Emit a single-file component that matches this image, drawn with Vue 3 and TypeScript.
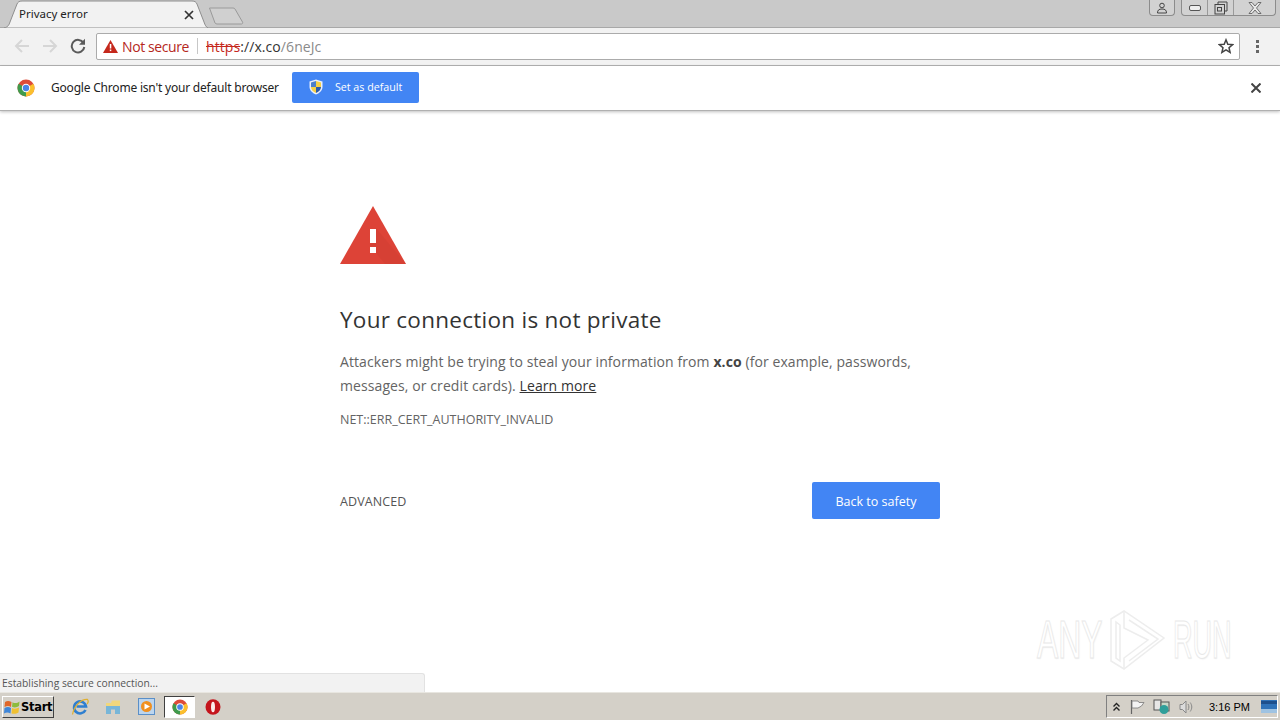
<script setup lang="ts">
const trayTime: string = '3:16 PM'
</script>

<template>
  <div class="screen">
    <header class="strip">
      <div class="tab">
        <svg class="tab-bg" width="204" height="28" viewBox="0 0 204 28">
          <path d="M0 28 C4 27 5 25 6 22 L13 4 C14 2 15 1 18 1 L188 1 C191 1 192 2 193 4 L200 22 C201 25 202 27 204 28 Z" fill="#f2f2f2" stroke="#8e8e8e" stroke-width="1"/>
        </svg>
        <span class="tab-title">Privacy error</span>
        <svg class="tab-close" width="10" height="10" viewBox="0 0 10 10"><path d="M1 1 L9 9 M9 1 L1 9" stroke="#333" stroke-width="1.7"/></svg>
      </div>
      <svg class="new-tab" width="36" height="18" viewBox="0 0 36 18"><path d="M1.5 1 L25 1 C26 1 26.5 1.3 27 2 L34.5 15 C35 16 34.5 17 33.500 17 L9 17 C8 17 7.500 16.500 7 16 Z" fill="#d0d0d0" stroke="#9a9a9a"/></svg>
      <div class="win-controls">
        <div class="win-group user">
          <svg width="12" height="12" viewBox="0 0 12 12"><circle cx="6" cy="3.500" r="2.300" fill="none" stroke="#444"/><path d="M1.500 11 C1.500 8 3 7 6 7 C9 7 10.500 8 10.500 11 Z" fill="none" stroke="#444"/></svg>
        </div>
        <div class="win-group">
          <div class="win-btn min"><span class="min-bar"></span></div>
          <div class="win-btn restore">
            <svg width="14" height="14" viewBox="0 0 14 14"><path d="M4 3.500 V1 H13 V10 H10.500" fill="none" stroke="#444"/><rect x="1" y="3.500" width="9.500" height="9.500" fill="none" stroke="#444"/><rect x="3.500" y="6.500" width="4" height="3.500" fill="none" stroke="#444"/></svg>
          </div>
          <div class="win-btn close">
            <svg width="14" height="12" viewBox="0 0 14 12"><path d="M1 0.500 L4 0.500 L7 4 L10 0.500 L13 0.500 L8.500 6 L13 11.500 L10 11.500 L7 8 L4 11.500 L1 11.500 L5.500 6 Z" fill="#e8e8e8" stroke="#555" stroke-width="0.800"/></svg>
          </div>
        </div>
      </div>
    </header>

    <nav class="toolbar">
      <svg class="nav-icon first" width="16" height="16" viewBox="0 0 16 16"><path d="M15 8 H2.500 M8 2 L2 8 L8 14" fill="none" stroke="#d6d6d6" stroke-width="2"/></svg>
      <svg class="nav-icon" width="16" height="16" viewBox="0 0 16 16"><path d="M1 8 H13.500 M8 2 L14 8 L8 14" fill="none" stroke="#d6d6d6" stroke-width="2"/></svg>
      <svg class="nav-icon" width="16" height="16" viewBox="0 0 16 16"><path d="M13.500 5 A6.300 6.300 0 1 0 14.300 9" fill="none" stroke="#5a5a5a" stroke-width="2"/><path d="M15 0.800 V6.800 H9 Z" fill="#5a5a5a"/></svg>
      <div class="omnibox">
        <svg class="warn" width="15" height="13" viewBox="0 0 15 13"><path d="M7.500 0 L15 13 H0 Z" fill="#c5281c"/><rect x="6.800" y="4" width="1.500" height="4.500" fill="#fff"/><rect x="6.800" y="9.500" width="1.500" height="1.600" fill="#fff"/></svg>
        <span class="not-secure">Not secure</span>
        <span class="sep"></span>
        <span class="url"><span class="scheme">https</span><span class="host">://x.co</span><span class="path">/6neJc</span></span>
        <svg class="star" width="16" height="16" viewBox="0 0 16 16"><path d="M8 1.800 L9.800 6.200 L14.600 6.600 L11 9.700 L12.100 14.400 L8 11.900 L3.900 14.400 L5 9.700 L1.400 6.600 L6.200 6.200 Z" fill="none" stroke="#444" stroke-width="1.500"/></svg>
      </div>
      <div class="menu-dots"><i></i><i></i><i></i></div>
    </nav>

    <section class="infobar">
      <svg class="chrome-icon" width="18" height="18" viewBox="0 0 18 18">
        <circle cx="9" cy="9" r="8.500" fill="#dd4b39"/>
        <path d="M9 9 L16.400 4.800 A8.500 8.500 0 0 1 9 17.500 Z" fill="#fbc02d"/>
        <path d="M9 9 L9 17.500 A8.500 8.500 0 0 1 1.600 4.800 Z" fill="#3f9b4c"/>
        <circle cx="9" cy="9" r="4.200" fill="#fff"/>
        <circle cx="9" cy="9" r="3.200" fill="#4a84e8"/>
      </svg>
      <span class="info-text">Google Chrome isn't your default browser</span>
      <div class="set-default">
        <svg width="14" height="16" viewBox="0 0 14 16">
          <path d="M7 0.500 L13.500 2.500 V8 C13.500 11.500 10 14.500 7 15.500 C4 14.500 0.500 11.500 0.500 8 V2.500 Z" fill="#e8eefc"/>
          <path d="M7 2 L12 3.500 V8 H7 Z" fill="#f5cf45"/>
          <path d="M7 2 L2 3.500 V8 H7 Z" fill="#4a7ecb"/>
          <path d="M2 8 H7 V14 C4.500 13 2 11 2 8 Z" fill="#f5cf45"/>
          <path d="M12 8 H7 V14 C9.500 13 12 11 12 8 Z" fill="#2d5aa8"/>
        </svg>
        <span>Set as default</span>
      </div>
      <svg class="info-close" width="10" height="10" viewBox="0 0 10 10"><path d="M0.500 0.500 L9.500 9.500 M9.500 0.500 L0.500 9.500" stroke="#444" stroke-width="2"/></svg>
    </section>

    <main class="page">
      <div class="interstitial">
        <svg class="big-warn" width="66" height="58" viewBox="0 0 66 58">
          <path d="M33 0 L66 58 H0 Z" fill="#dd4337"/>
          <path d="M36 22 L66 58 H45 L30 40 Z" fill="#c4382d" opacity="0.250"/>
          <rect x="30" y="23" width="6" height="14" fill="#fff"/>
          <rect x="30" y="41" width="6" height="6" fill="#fff"/>
        </svg>
        <h1>Your connection is not private</h1>
        <p class="msg">Attackers might be trying to steal your information from <b>x.co</b> (for example, passwords, messages, or credit cards). <a>Learn more</a></p>
        <p class="code">NET::ERR_CERT_AUTHORITY_INVALID</p>
        <div class="actions">
          <span class="advanced">ADVANCED</span>
          <div class="back"><span>Back to safety</span></div>
        </div>
      </div>
      <div class="status">Establishing secure connection...</div>
      <div class="watermark">
        <span class="wm-text wm-any">ANY</span>
        <svg class="wm-mark" width="58" height="64" viewBox="0 0 58 64">
          <g fill="none" stroke="#ededed" stroke-width="1.500">
            <path d="M3 11 L16 3 L56 30 L16 61 L3 53 Z"/>
            <path d="M8 14 L8 50 L12 53 L12 17 Z"/>
            <path d="M16 3 L16 20 L40 32 L16 50 L16 61"/>
            <path d="M21 12 L50 31 L21 53"/>
          </g>
        </svg>
        <span class="wm-text wm-run">RUN</span>
      </div>
    </main>

    <footer class="taskbar">
      <div class="start">
        <svg width="16" height="16" viewBox="0 0 16 16"><path d="M1 3 C3 1.500 5 1.500 7.500 3 L7 8 C5 6.800 3 6.800 0.500 8 Z" fill="#e0672a"/><path d="M8.500 3.200 C10.500 4.500 13 4.500 15.500 2.500 L15 7 C13 8.500 10.500 8.800 8 7.800 Z" fill="#8dbb3c"/><path d="M0.500 9 C3 7.800 5 7.800 7 9 L6.500 14.500 C4.500 13 2 13 0 14.500 Z" fill="#3f86d8"/><path d="M8 9 C10 10 13 9.800 15 8.500 L14.500 13.500 C12.500 15 10 15 7.500 14.500 Z" fill="#f0c030"/></svg>
        <span>Start</span>
      </div>
      <div class="quick">
        <svg class="ql ie" width="18" height="18" viewBox="0 0 18 18"><path d="M14.500 12 A6 6 0 1 1 15 8.500 H5.500" fill="none" stroke="#2f7fd0" stroke-width="2.600"/><path d="M1.500 16.500 C3 8 10 1 16.500 1.500 C17.500 3 17 5 16 6" fill="none" stroke="#e0b030" stroke-width="1.300"/></svg>
        <svg class="ql folder" width="18" height="18" viewBox="0 0 18 18"><path d="M2 5 L7 5 L8 2.500 L16 2.500 V10 H2 Z" fill="#f1d77c"/><path d="M2 8 H16 V16 H11 V11.500 H7 V16 H2 Z" fill="#78b6d8"/></svg>
        <svg class="ql wmp" width="17" height="17" viewBox="0 0 17 17"><rect x="0.500" y="0.500" width="16" height="16" fill="#bcd5ee" stroke="#5a8fc8"/><circle cx="8.500" cy="8.500" r="5.500" fill="#f09020"/><path d="M6.500 5.500 L12 8.500 L6.500 11.500 Z" fill="#fff"/></svg>
        <div class="active-app">
          <svg width="16" height="16" viewBox="0 0 18 18">
            <circle cx="9" cy="9" r="8.500" fill="#dd4b39"/>
            <path d="M9 9 L16.400 4.800 A8.500 8.500 0 0 1 9 17.500 Z" fill="#fbc02d"/>
            <path d="M9 9 L9 17.500 A8.500 8.500 0 0 1 1.600 4.800 Z" fill="#3f9b4c"/>
            <circle cx="9" cy="9" r="4.200" fill="#fff"/>
            <circle cx="9" cy="9" r="3.200" fill="#4a84e8"/>
          </svg>
        </div>
        <svg class="ql opera" width="16" height="16" viewBox="0 0 16 16"><ellipse cx="8" cy="8" rx="7.500" ry="7.700" fill="#c4141c"/><ellipse cx="8" cy="8" rx="2" ry="5.300" fill="#fbeaea"/></svg>
      </div>
      <div class="tray">
        <span class="chev">
          <svg width="7" height="10" viewBox="0 0 7 10"><path d="M0.500 4.500 L3.500 1.500 L6.500 4.500 M0.500 8.500 L3.500 5.500 L6.500 8.500" fill="none" stroke="#222" stroke-width="1.400"/></svg>
        </span>
        <svg class="t-flag" width="16" height="16" viewBox="0 0 16 16"><path d="M2.500 1 V15" stroke="#666" stroke-width="1.200"/><path d="M3 2 H9 L10 3.500 H15 L12.500 7 L9 9 H3 Z" fill="#f3f3f3" stroke="#777" stroke-width="0.800"/></svg>
        <svg class="t-net" width="17" height="16" viewBox="0 0 17 16"><rect x="1" y="1" width="7" height="10" fill="#e6e6e6" stroke="#555"/><rect x="8" y="3" width="8" height="9" fill="#c8d8c8" stroke="#555"/><circle cx="11" cy="10.500" r="4.500" fill="#2f9f9a"/></svg>
        <svg class="t-vol" width="16" height="16" viewBox="0 0 16 16"><path d="M2 5.500 H4.500 L8 2 V14 L4.500 10.500 H2 Z" fill="#dcdcdc" stroke="#888"/><path d="M10 5 C11.200 7 11.200 9 10 11 M12.200 3.500 C14.300 6.500 14.300 9.500 12.200 12.500" fill="none" stroke="#888"/></svg>
        <span class="clock">{{ trayTime }}</span>
        <svg class="t-desk" width="16" height="13" viewBox="0 0 16 13"><rect width="16" height="13" fill="#2f72b8"/><rect y="1" width="16" height="3" fill="#1d4f8c"/><rect y="9" width="16" height="4" fill="#9fc3e2"/></svg>
      </div>
    </footer>
  </div>
</template>

<style>
html, body { margin: 0; background: #fff; overflow: hidden; }
</style>

<style scoped>
.screen {
  width: 1280px;
  height: 720px;
  display: flex;
  flex-direction: column;
  font-family: "Open Sans", "Noto Sans", sans-serif;
  color: #333;
  overflow: hidden;
}
.strip {
  height: 28px;
  flex: none;
  display: flex;
  background: #c9c9c9;
  padding-left: 4px;
  box-sizing: border-box;
  border-bottom: 1px solid #a8a8a8;
}
.tab {
  position: relative;
  width: 204px;
  height: 28px;
  display: flex;
  align-items: center;
  padding: 0 0 0 15px;
  box-sizing: border-box;
}
.tab-bg { position: absolute; left: 0; top: 0; }
.tab-title {
  position: relative;
  font-size: 11.500px;
  color: #222;
  font-family: "Noto Sans", sans-serif;
  margin-top: -1px;
}
.tab-close { position: absolute; left: 180px; top: 10px; }
.new-tab { margin-top: 7px; margin-left: 0; }
.win-controls {
  margin-left: auto;
  display: flex;
  gap: 6px;
  margin-right: 4px;
  height: 16px;
}
.win-group {
  display: flex;
  border: 1px solid #8c8c8c;
  border-top: none;
  border-radius: 0 0 4px 4px;
  background: #d2d2d2;
}
.user {
  width: 24px;
  justify-content: center;
  align-items: center;
}
.win-btn {
  display: flex;
  align-items: center;
  justify-content: center;
  border-left: 1px solid #9a9a9a;
}
.min { width: 25px; border-left: none; }
.restore { width: 25px; }
.close { width: 41px; }
.min-bar {
  display: block;
  width: 10px;
  height: 4px;
  background: #eee;
  border: 1px solid #555;
  border-radius: 2px;
}
.toolbar {
  height: 38px;
  flex: none;
  display: flex;
  align-items: center;
  background: #f2f2f2;
  box-sizing: border-box;
  border-bottom: 1px solid #b4b4b4;
  padding: 0 0 1px 14px;
}
.nav-icon { margin-right: 12px; }
.omnibox {
  width: 1144px;
  height: 27px;
  margin-left: -2px;
  box-sizing: border-box;
  background: #fff;
  border: 1px solid #ababab;
  border-radius: 2px;
  display: flex;
  align-items: center;
  padding: 0 6px;
  font-size: 14px;
}
.warn { flex: none; }
.not-secure { color: #b5271d; margin-left: 4px; font-size: 14px; letter-spacing: -0.400px; }
.sep { width: 1px; height: 16px; background: #c7c7c7; margin: 0 8px 0 8px; }
.url { letter-spacing: 0.080px; }
.scheme { color: #c5281c; text-decoration: line-through; }
.host { color: #333; }
.path { color: #8a8a8a; }
.star { margin-left: auto; margin-right: -1px; }
.menu-dots {
  display: flex;
  flex-direction: column;
  gap: 2px;
  margin-left: 16px;
}
.menu-dots i { display: block; width: 3px; height: 3px; background: #666; }
.infobar {
  height: 45px;
  flex: none;
  box-sizing: border-box;
  background: #fff;
  border-bottom: 1px solid #b0b0b0;
  box-shadow: 0 1px 3px rgba(0, 0, 0, 0.250);
  display: flex;
  align-items: center;
  padding: 0 19px 2px 17px;
  position: relative;
  z-index: 1;
}
.chrome-icon { flex: none; margin-top: 2px; }
.info-text {
  margin-left: 16px;
  font-size: 12px;
  color: #222;
  font-family: "Noto Sans", sans-serif;
  letter-spacing: -0.200px;
}
.set-default {
  margin-left: 13px;
  width: 127px;
  height: 31px;
  background: #4285f4;
  border-radius: 2px;
  color: #fff;
  font-size: 10.700px;
  display: flex;
  align-items: center;
  box-sizing: border-box;
  padding-left: 17px;
  gap: 12px;
}
.info-close { margin-left: auto; margin-top: 2px; }
.page {
  flex: 1;
  position: relative;
  background: #fff;
  min-height: 0;
}
.interstitial {
  width: 600px;
  margin-left: 340px;
  padding-top: 95px;
}
.big-warn { display: block; }
h1 {
  margin: 39px 0 0;
  font-size: 22.500px;
  line-height: 34px;
  font-weight: 400;
  color: #333;
  letter-spacing: 0.270px;
}
.msg {
  margin: 13px 0 0;
  font-size: 14px;
  line-height: 24px;
  color: #646464;
  letter-spacing: 0.090px;
}
.msg b { color: #444; }
.msg a { color: #333; text-decoration: underline; }
.code {
  margin: 13px 0 0;
  font-size: 12.500px;
  line-height: 18px;
  color: #646464;
}
.actions {
  margin-top: 53px;
  display: flex;
  align-items: center;
  justify-content: space-between;
}
.advanced { font-size: 12.500px; color: #555; letter-spacing: 0.100px; padding-top: 1px; }
.back {
  width: 128px;
  height: 37px;
  background: #4285f4;
  border-radius: 2px;
  color: #fff;
  font-size: 12.500px;
  display: flex;
  align-items: center;
  justify-content: center;
}
.back span { padding-top: 1px; }
.status {
  position: absolute;
  left: 0;
  bottom: 0;
  width: 425px;
  height: 19px;
  box-sizing: border-box;
  background: #f2f2f2;
  border: 1px solid #e2e2e2;
  border-left: none;
  border-bottom: none;
  border-radius: 0 3px 0 0;
  font-size: 10.300px;
  line-height: 18px;
  padding-left: 2px;
  color: #555;
}
.watermark {
  position: absolute;
  left: 1037px;
  top: 497px;
  width: 196px;
  height: 64px;
}
.wm-mark { position: absolute; left: 71px; top: 0; }
.wm-text {
  position: absolute;
  top: 0;
  display: block;
  font-size: 53px;
  line-height: 64px;
  font-family: "Liberation Sans", sans-serif;
  color: #fff;
  -webkit-text-stroke: 1px #e8e8e8;
  text-shadow: 1px 1px 2px #efefef;
  transform-origin: left center;
  transform: scaleX(0.600);
}
.wm-any { left: 0; }
.wm-run { left: 136px; transform: scaleX(0.510); }
.taskbar {
  height: 28px;
  flex: none;
  box-sizing: border-box;
  background: #d4d0c8;
  border-top: 1px solid #e8e6e0;
  display: flex;
  align-items: center;
  padding-left: 2px;
  position: relative;
}
.start {
  width: 52px;
  height: 22px;
  box-sizing: border-box;
  background: #d4d0c8;
  border: 1px solid;
  border-color: #fff #404040 #404040 #fff;
  display: flex;
  align-items: center;
  gap: 1px;
  padding-left: 1px;
  font-family: "DejaVu Sans", sans-serif;
  font-size: 11.500px;
  font-weight: 700;
  letter-spacing: -0.300px;
  color: #000;
}
.quick {
  display: flex;
  align-items: center;
  margin-left: 17px;
}
.ql { flex: none; }
.folder { margin-left: 15px; }
.wmp { margin-left: 16px; }
.active-app {
  width: 31px;
  height: 22px;
  margin-left: 9px;
  box-sizing: border-box;
  background: #fff;
  border: 1px solid;
  border-color: #404040 #fff #fff #404040;
  display: flex;
  align-items: center;
  justify-content: center;
}
.opera { margin-left: 10px; }
.tray {
  margin-left: auto;
  height: 23px;
  width: 172px;
  box-sizing: border-box;
  margin-right: 2px;
  border: 1px solid;
  border-color: #808080 #fff #fff #808080;
  display: flex;
  align-items: center;
  padding-left: 6px;
}
.chev { display: flex; width: 10px; }
.t-flag { margin-left: 6px; }
.t-net { margin-left: 8px; }
.t-vol { margin-left: 8px; }
.clock {
  font-family: "Liberation Sans", sans-serif;
  font-size: 11px;
  color: #000;
  margin-left: 15px;
  white-space: nowrap;
}
.t-desk { margin-left: auto; }
</style>
